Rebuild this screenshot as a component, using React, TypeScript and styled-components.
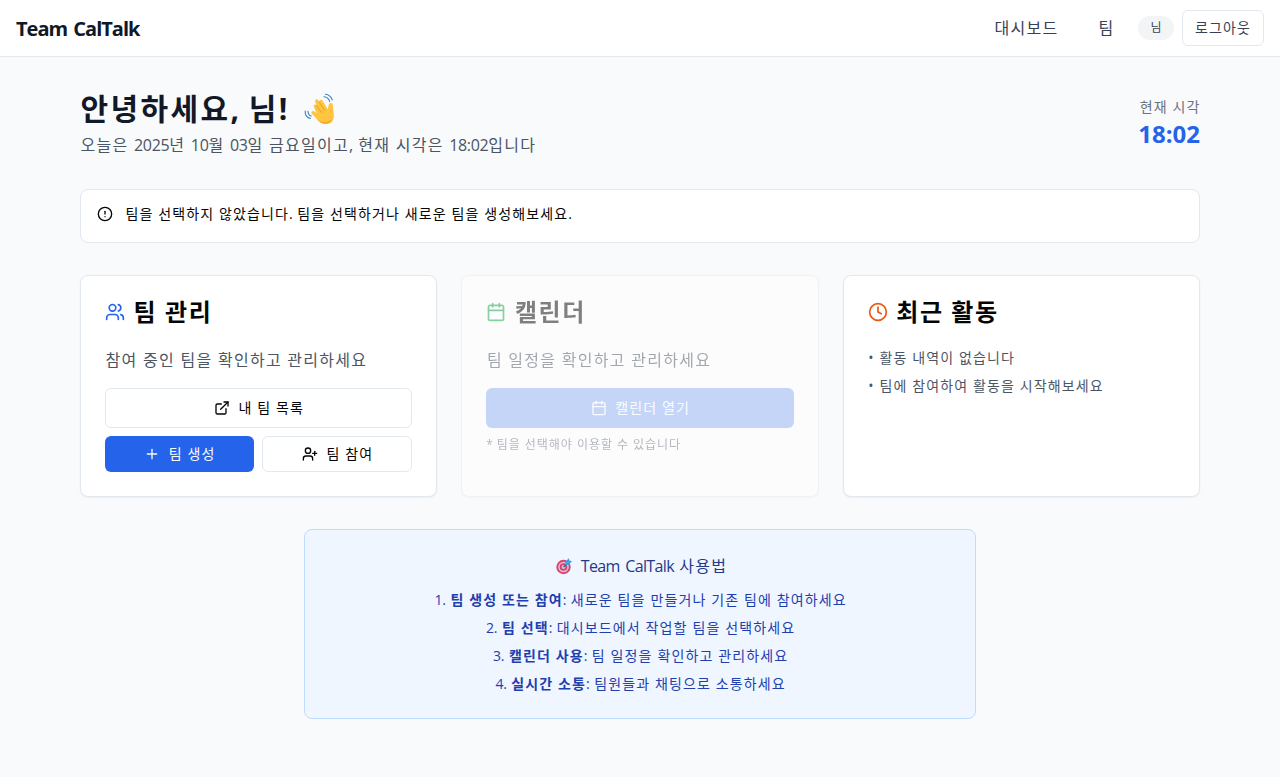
import React from 'react';
import styled, { createGlobalStyle, css } from 'styled-components';
import { Calendar, CircleAlert, Clock, ExternalLink, Plus, UserPlus, Users } from 'lucide-react';

const GlobalStyle = createGlobalStyle`
  *, *::before, *::after { box-sizing: border-box; }
  body {
    margin: 0;
    background: #f9fafb;
    color: #050505;
    font-family: 'Open Sans', 'Noto Sans CJK KR', sans-serif;
    font-size: 16px;
    line-height: 24px;
  }
  h1, h2, h3, p, ul, ol { margin: 0; padding: 0; }
  ul, ol { list-style: none; }
  button, a { font: inherit; color: inherit; text-decoration: none; }
  svg { flex-shrink: 0; display: block; }
`;

const Hangul = styled.span`
  padding-left: 0.6px;
  margin-right: -0.6px;
  letter-spacing: 0.08em;
  white-space: pre;
`;

const Latin = styled.span<{ $tight?: boolean }>`
  letter-spacing: ${(p) => (p.$tight ? '-0.04em' : '-0.02em')};
`;

/* Korean copy is tracked wider than the Latin letters and digits inside it. */
const Text = ({ children, tight }: { children: string; tight?: boolean }) => (
  <Hangul>
    {children.split(/([A-Za-z0-9:.,!*]+)/).map((part, i) =>
      i % 2 ? <Latin key={i} $tight={tight}>{part}</Latin> : part,
    )}
  </Hangul>
);

const Page = styled.div`
  min-height: 777px;
  background: #f9fafb;
`;

const TopBar = styled.header`
  display: flex;
  align-items: center;
  justify-content: space-between;
  height: 57px;
  padding: 0 16px;
  background: #fff;
  border-bottom: 1px solid #e5e7eb;
`;

const Brand = styled.h1`
  padding-top: 2px;
  font-size: 20px;
  line-height: 28px;
  font-weight: 700;
  color: #111827;
  letter-spacing: -1px;
  word-spacing: 2px;
`;

const Nav = styled.nav`
  display: flex;
  align-items: center;
  gap: 8px;
`;

const NavLink = styled.a`
  padding: 0 16px;
  color: #374151;
`;

const Badge = styled.span`
  padding: 4px 12px;
  border-radius: 999px;
  background: #f3f4f6;
  color: #374151;
  font-size: 12px;
  line-height: 16px;
`;

const Button = styled.button<{ $variant?: 'primary' | 'outline'; $size?: 'sm' | 'md'; $dim?: boolean }>`
  display: flex;
  align-items: center;
  justify-content: center;
  gap: 8px;
  height: ${(p) => (p.$size === 'sm' ? 36 : 40)}px;
  padding: 0 12px;
  border-radius: 6px;
  font-size: 14px;
  line-height: 20px;
  opacity: ${(p) => (p.$dim ? 0.5 : 1)};
  ${(p) =>
    p.$variant === 'primary'
      ? css`
          border: 0;
          background: #2563eb;
          color: #f8fafc;
        `
      : css`
          border: 1px solid #e2e8f0;
          background: #fff;
          color: #050505;
        `}
`;

const LogoutButton = styled(Button)`
  color: #374151;

  ${Hangul} { padding-left: 0; margin-right: 0; }
`;

const Main = styled.main`
  display: flex;
  flex-direction: column;
  gap: 32px;
  width: 1120px;
  margin: 0 auto;
  padding-top: 32px;
`;

const Greeting = styled.section`
  display: flex;
  align-items: center;
  justify-content: space-between;
`;

const GreetingTitle = styled.h2`
  display: flex;
  align-items: center;
  gap: 17.5px;
  height: 36px;
  margin-bottom: 8px;
  padding-top: 3px;
  font-size: 30px;
  line-height: 36px;
  font-weight: 700;
  color: #111827;

  svg { margin-top: 1px; }
`;

const Muted = styled.p`
  color: #4b5563;
`;

const ClockBox = styled.div`
  text-align: right;
`;

const ClockLabel = styled.p`
  font-size: 14px;
  line-height: 20px;
  color: #6b7280;
`;

const ClockValue = styled.p`
  height: 32px;
  padding-top: 1px;
  font-size: 24px;
  line-height: 32px;
  font-weight: 700;
  color: #2563eb;
`;

const Alert = styled.section`
  display: flex;
  gap: 12px;
  height: 54px;
  padding: 14px 16px;
  border: 1px solid #e2e8f0;
  border-radius: 8px;
  background: #fff;
  font-size: 14px;
  line-height: 20px;

  svg { margin-top: 2px; }
`;

const Cards = styled.section`
  display: grid;
  grid-template-columns: repeat(3, 1fr);
  gap: 24px;
`;

const Card = styled.article<{ $dim?: boolean }>`
  height: 222px;
  padding: 24px;
  border: 1px solid #e2e8f0;
  border-radius: 8px;
  background: #fff;
  box-shadow: 0 1px 2px rgba(0, 0, 0, 0.05);
  opacity: ${(p) => (p.$dim ? 0.5 : 1)};
`;

const CardTitle = styled.h3<{ $icon: string }>`
  display: flex;
  align-items: center;
  gap: 8px;
  height: 24px;
  margin-bottom: 24px;
  font-size: 24px;
  line-height: 24px;
  font-weight: 700;

  svg { color: ${(p) => p.$icon}; }
  ${Hangul} { letter-spacing: 0.065em; }
`;

const CardText = styled(Muted)`
  margin-bottom: 16px;
`;

const ButtonStack = styled.div`
  display: grid;
  grid-template-columns: 149px 1fr;
  gap: 8px;
`;

const WideButton = styled(Button)`
  grid-column: 1 / -1;
  width: 100%;
`;

const Note = styled.p`
  margin-top: 9px;
  font-size: 12px;
  line-height: 16px;
  color: #6b7280;

  ${Hangul} { padding-left: 0; }
`;

const Activity = styled.ul`
  display: grid;
  gap: 8px;
  font-size: 14px;
  line-height: 20px;
  color: #4b5563;
`;

const Guide = styled.section`
  width: 672px;
  height: 190px;
  margin: 0 auto;
  padding: 24px;
  border: 1px solid #bfdbfe;
  border-radius: 8px;
  background: #eff6ff;
  text-align: center;
`;

const GuideTitle = styled.h3`
  display: flex;
  align-items: center;
  justify-content: center;
  gap: 8px;
  height: 24px;
  margin-bottom: 12px;
  padding-left: 3px;
  font-size: 16px;
  font-weight: 400;
  color: #1e3a8a;
`;

const Steps = styled.ol`
  display: grid;
  gap: 8px;
  font-size: 14px;
  line-height: 20px;
  color: #1e40af;
`;

const WaveIcon = () => (
  <svg width="32" height="32" viewBox="0 0 32 32" fill="none">
    <path
      d="M10 14.200c-1.200-2.200 1.400-3.800 2.800-1.900l-1.600-3.600c-.9-2.400 1.900-3.600 3.200-1.400l1 1.900c-.6-2.400 2.200-3.500 3.400-1.200l4.900 8.300 1.100-4.800c.7-2.400 4.200-2 4.100.8l1 10.200c.2 5-3.100 8.500-8.200 8.500-3.100 0-5.300-1.300-7.300-3.500l-6.400-6.400c-1.700-2.100.7-4 2.600-2.500l2.100 1.600z"
      fill="#ffc540"
    />
    <path d="M12.500 12.500l5 7M15 8.800l5.500 8.200" stroke="#e99a1c" strokeWidth="0.9" strokeLinecap="round" />
    <path d="M11.500 25c4 5 12.500 5.500 17.500.200-1.500 3.700-4.300 5.600-7.600 5.600-4.100 0-7-2.300-9.900-5.800z" fill="#f8aa27" />
    <path
      d="M20 3.800c2.800.2 4.800 1.900 5.700 4.600M21.500 1.200c3.500.5 5.800 2.600 6.800 5.700M1.200 18c-.2 4 1.600 6.600 5.100 7.400M4 18.300c0 2.500 1 4 3.100 4.800"
      stroke="#2d7fc4"
      strokeWidth="1.100"
      strokeLinecap="round"
    />
  </svg>
);

const TargetIcon = () => (
  <svg width="16" height="18" viewBox="0 0 16 18" fill="none">
    <circle cx="7.500" cy="10" r="7.200" fill="#df3f70" />
    <circle cx="7.500" cy="10" r="5.300" fill="#d9c5d7" />
    <circle cx="7.500" cy="10" r="3.800" fill="#d8446f" />
    <circle cx="7.500" cy="10" r="1.900" fill="#d9c5d7" />
    <path d="M7.500 10l4-4" stroke="#33658f" strokeWidth="1.200" />
    <path d="M9.500 8V4.500l3.300-3.300.7 2.300 2.500.7-3.400 3.600z" fill="#37a5ea" />
  </svg>
);

const steps = [
  ['팀 생성 또는 참여', '새로운 팀을 만들거나 기존 팀에 참여하세요'],
  ['팀 선택', '대시보드에서 작업할 팀을 선택하세요'],
  ['캘린더 사용', '팀 일정을 확인하고 관리하세요'],
  ['실시간 소통', '팀원들과 채팅으로 소통하세요'],
];

export default function App() {
  return (
    <Page>
      <GlobalStyle />
      <TopBar>
        <Brand>Team CalTalk</Brand>
        <Nav>
          <NavLink><Text>대시보드</Text></NavLink>
          <NavLink><Text>팀</Text></NavLink>
          <Badge><Text>님</Text></Badge>
          <LogoutButton $size="sm"><Text>로그아웃</Text></LogoutButton>
        </Nav>
      </TopBar>
      <Main>
        <Greeting>
          <div>
            <GreetingTitle><Text>안녕하세요, 님!</Text><WaveIcon /></GreetingTitle>
            <Muted><Text>오늘은 2025년 10월 03일 금요일이고, 현재 시각은 18:02입니다</Text></Muted>
          </div>
          <ClockBox>
            <ClockLabel><Text>현재 시각</Text></ClockLabel>
            <ClockValue>18:02</ClockValue>
          </ClockBox>
        </Greeting>
        <Alert>
          <CircleAlert size={16} />
          <Text>팀을 선택하지 않았습니다. 팀을 선택하거나 새로운 팀을 생성해보세요.</Text>
        </Alert>
        <Cards>
          <Card>
            <CardTitle $icon="#2563eb"><Users size={20} /><Text>팀 관리</Text></CardTitle>
            <CardText><Text>참여 중인 팀을 확인하고 관리하세요</Text></CardText>
            <ButtonStack>
              <WideButton><ExternalLink size={16} /><Text>내 팀 목록</Text></WideButton>
              <Button $variant="primary" $size="sm"><Plus size={16} /><Text>팀 생성</Text></Button>
              <Button $size="sm"><UserPlus size={16} /><Text>팀 참여</Text></Button>
            </ButtonStack>
          </Card>
          <Card $dim>
            <CardTitle $icon="#16a34a"><Calendar size={20} /><Text>캘린더</Text></CardTitle>
            <CardText><Text>팀 일정을 확인하고 관리하세요</Text></CardText>
            <WideButton $variant="primary" $dim disabled><Calendar size={16} /><Text>캘린더 열기</Text></WideButton>
            <Note><Text>* 팀을 선택해야 이용할 수 있습니다</Text></Note>
          </Card>
          <Card>
            <CardTitle $icon="#ea580c"><Clock size={20} /><Text>최근 활동</Text></CardTitle>
            <Activity>
              <li><Text>• 활동 내역이 없습니다</Text></li>
              <li><Text>• 팀에 참여하여 활동을 시작해보세요</Text></li>
            </Activity>
          </Card>
        </Cards>
        <Guide>
          <GuideTitle><TargetIcon /><Text tight>Team CalTalk 사용법</Text></GuideTitle>
          <Steps>
            {steps.map(([name, detail], i) => (
              <li key={name}>
                <Text>{`${i + 1}. `}</Text>
                <strong><Text>{name}</Text></strong>
                <Text>{`: ${detail}`}</Text>
              </li>
            ))}
          </Steps>
        </Guide>
      </Main>
    </Page>
  );
}
